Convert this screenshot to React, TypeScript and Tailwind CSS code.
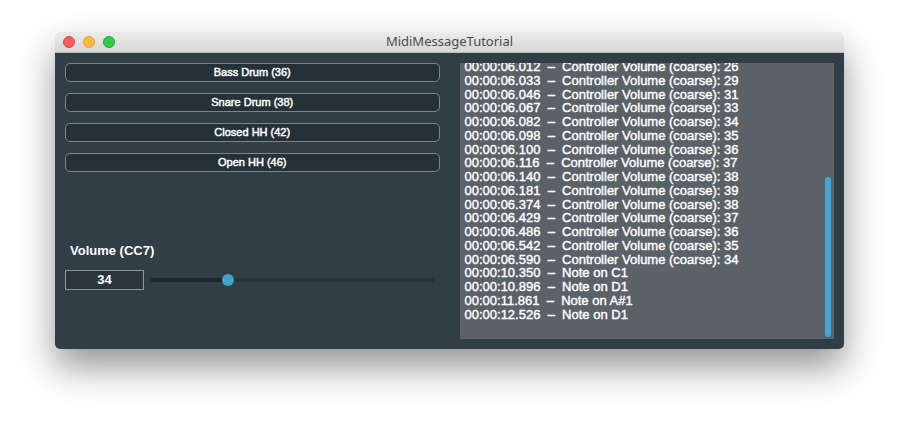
import React from "react";

// ── Data ──────────────────────────────────────────────────────────────────────
const buttons = ["Bass Drum (36)", "Snare Drum (38)", "Closed HH (42)", "Open HH (46)"];

const log: [string, string][] = [
  ["00:00:06.012", "Controller Volume (coarse): 26"],
  ["00:00:06.033", "Controller Volume (coarse): 29"],
  ["00:00:06.046", "Controller Volume (coarse): 31"],
  ["00:00:06.067", "Controller Volume (coarse): 33"],
  ["00:00:06.082", "Controller Volume (coarse): 34"],
  ["00:00:06.098", "Controller Volume (coarse): 35"],
  ["00:00:06.100", "Controller Volume (coarse): 36"],
  ["00:00:06.116", "Controller Volume (coarse): 37"],
  ["00:00:06.140", "Controller Volume (coarse): 38"],
  ["00:00:06.181", "Controller Volume (coarse): 39"],
  ["00:00:06.374", "Controller Volume (coarse): 38"],
  ["00:00:06.429", "Controller Volume (coarse): 37"],
  ["00:00:06.486", "Controller Volume (coarse): 36"],
  ["00:00:06.542", "Controller Volume (coarse): 35"],
  ["00:00:06.590", "Controller Volume (coarse): 34"],
  ["00:00:10.350", "Note on C1"],
  ["00:00:10.896", "Note on D1"],
  ["00:00:11.861", "Note on A#1"],
  ["00:00:12.526", "Note on D1"],
];

// ── Main ──────────────────────────────────────────────────────────────────────
export default function App() {
  return (
    <div
      className="min-h-[428px] w-[900px] bg-white pt-[32px] pl-[55px]"
      style={{ fontFamily: '"Liberation Sans", Arial, sans-serif' }}
    >
      {/* Window */}
      <div className="w-[789px] overflow-hidden rounded-[5px] shadow-[0_18px_36px_rgba(0,0,0,0.42)]">
        {/* Title bar */}
        <div className="relative flex h-[21px] items-center justify-center border-b border-[#b9b9b9] bg-gradient-to-b from-[#ececec] to-[#d6d6d6]">
          <div className="absolute top-[4px] left-[8px] flex gap-[8px]">
            <span className="h-[12px] w-[12px] rounded-full border border-[#e0443e] bg-[#fc605c]" />
            <span className="h-[12px] w-[12px] rounded-full border border-[#dea236] bg-[#fdbc40]" />
            <span className="h-[12px] w-[12px] rounded-full border border-[#1aab29] bg-[#34c84a]" />
          </div>
          <span className="text-[13px] text-[#4b4b4b]" style={{ fontFamily: '"Noto Sans", sans-serif' }}>
            MidiMessageTutorial
          </span>
        </div>

        {/* Content */}
        <div className="flex h-[296px] gap-[20px] bg-[#323e45] p-[10px]">
          {/* Left column */}
          <div className="flex w-[375px] flex-col">
            <div className="flex flex-col gap-[11px]">
              {buttons.map((b) => (
                <div
                  key={b}
                  className="flex h-[19px] items-center justify-center rounded-[5px] border-[1.5px] border-[#7b8488] bg-[#263137] text-[11px] text-white [-webkit-text-stroke:0.45px_#fff]"
                >
                  {b}
                </div>
              ))}
            </div>

            <p className="mt-[71px] pl-[5px] text-[13px] leading-[16px] font-bold text-white">
              Volume (CC7)
            </p>

            <div className="mt-[11px] flex items-center gap-[7px]">
              <div className="flex h-[20px] w-[79px] items-center justify-center border border-[#8d9497] bg-[#2b363c] text-[13px] font-bold text-white">
                34
              </div>
              <div className="relative h-[4px] w-[283px] rounded-full bg-[#2a3338]">
                <div className="h-[4px] w-[77px] rounded-full bg-[#1d2428]" />
                <span className="absolute top-[-4px] left-[71px] h-[12px] w-[12px] rounded-full bg-[#3fa3cd]" />
              </div>
            </div>
          </div>

          {/* Right column: message log */}
          <div className="relative w-[375px] overflow-hidden bg-[#5a6268]">
            <div className="-mt-[3px] pl-[5px] text-[13px] leading-[13.75px] whitespace-pre text-white [-webkit-text-stroke:0.4px_#fff]">
              {log.map(([t, m]) => (
                <div key={t}>
                  {t}
                  {"  –  "}
                  {m}
                </div>
              ))}
            </div>
            <div className="absolute top-[114px] right-[3px] h-[160px] w-[6px] rounded-full bg-[#42a6d2]" />
          </div>
        </div>
      </div>
    </div>
  );
}
